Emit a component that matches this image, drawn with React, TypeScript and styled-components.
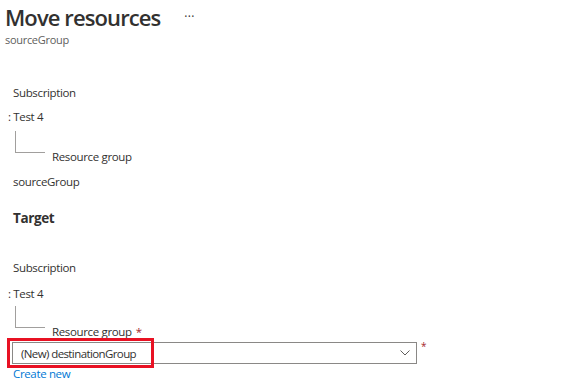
import React from 'react';
import styled, { createGlobalStyle } from 'styled-components';

const GlobalStyle = createGlobalStyle`
  body {
    margin: 0;
    background: #ffffff;
    font-family: "Segoe UI", "Open Sans", "Noto Sans", sans-serif;
    color: #323130;
  }
`;

const Page = styled.div`
  width: 586px;
  height: 382px;
  overflow: hidden;
  display: flex;
  flex-direction: column;
`;

const Header = styled.div`
  padding: 2px 0 0 5px;
  display: flex;
  flex-direction: column;
`;

const TitleRow = styled.div`
  display: flex;
  align-items: center;
  gap: 24px;
`;

const Title = styled.h1`
  margin: 0;
  font-size: 22px;
  font-weight: 600;
  line-height: 30px;
  letter-spacing: -0.9px;
`;

const More = styled.span`
  font-size: 12px;
  color: #323130;
  letter-spacing: 0.3px;
  margin-top: -2px;
`;

const Subtitle = styled.div`
  font-size: 11px;
  line-height: 16px;
  color: #605e5c;
  letter-spacing: -0.3px;
`;

const Section = styled.div<{ $top: number }>`
  display: flex;
  flex-direction: column;
  margin-top: ${({ $top }) => $top}px;
`;

const Label = styled.div<{ $indent?: number }>`
  font-size: 11.5px;
  line-height: 16px;
  letter-spacing: -0.35px;
  padding-left: ${({ $indent }) => $indent ?? 13}px;
  white-space: nowrap;
`;

const Value = styled(Label)<{ $gap: number }>`
  margin-top: ${({ $gap }) => $gap}px;
`;

const Heading = styled.h3<{ $gap: number }>`
  margin: ${({ $gap }) => $gap}px 0 0;
  padding-left: 13px;
  font-size: 13.5px;
  font-weight: 700;
  line-height: 20px;
  letter-spacing: -0.4px;
`;

const TreeRow = styled.div<{ $gap: number }>`
  display: flex;
  align-items: flex-start;
  margin-top: ${({ $gap }) => $gap}px;
`;

const Connector = styled.div`
  width: 29px;
  height: 21px;
  margin-left: 15px;
  border-left: 1px solid #a19f9d;
  border-bottom: 1px solid #a19f9d;
`;

const TreeLabel = styled.div`
  font-size: 11.5px;
  line-height: 16px;
  letter-spacing: -0.35px;
  margin: 18px 0 0 7px;
  white-space: nowrap;
`;

const Required = styled.span`
  color: #a4262c;
  margin-left: 4px;
`;

const DropdownRow = styled.div`
  position: relative;
  display: flex;
  align-items: flex-start;
  margin-top: 2px;
  padding-left: 12px;
`;

const Dropdown = styled.div`
  box-sizing: border-box;
  width: 405px;
  height: 22px;
  border: 1px solid #8a8886;
  display: flex;
  align-items: center;
  justify-content: space-between;
  padding: 0 6px 0 8px;
  font-size: 11.5px;
  letter-spacing: -0.6px;
`;

const FieldStar = styled.span`
  color: #a4262c;
  font-size: 10px;
  line-height: 10px;
  margin: -1px 0 0 4px;
`;

const Highlight = styled.div`
  position: absolute;
  left: 7px;
  top: -4px;
  width: 147px;
  height: 30px;
  box-sizing: border-box;
  border: 3px solid #e81123;
  pointer-events: none;
`;

const CreateLink = styled.a`
  font-size: 11.5px;
  line-height: 14px;
  letter-spacing: -0.35px;
  color: #0078d4;
  text-decoration: none;
  padding-left: 13px;
  margin-top: 3px;
`;

const Chevron = () => (
  <svg width="10" height="6" viewBox="0 0 10 6" fill="none">
    <path d="M0.5 0.5 L5 5 L9.5 0.5" stroke="#605e5c" strokeWidth="1" />
  </svg>
);

export default function App() {
  return (
    <Page>
      <GlobalStyle />
      <Header>
        <TitleRow>
          <Title>Move resources</Title>
          <More>···</More>
        </TitleRow>
        <Subtitle>sourceGroup</Subtitle>
      </Header>

      <Section $top={37}>
        <Label>Subscription</Label>
        <Value $indent={8} $gap={8}>: Test 4</Value>
        <TreeRow $gap={6}>
          <Connector />
          <TreeLabel>Resource group</TreeLabel>
        </TreeRow>
        <Value $gap={9}>sourceGroup</Value>
        <Heading $gap={18}>Target</Heading>
      </Section>

      <Section $top={32}>
        <Label>Subscription</Label>
        <Value $indent={8} $gap={10}>: Test 4</Value>
        <TreeRow $gap={4}>
          <Connector />
          <TreeLabel>
            Resource group<Required>*</Required>
          </TreeLabel>
        </TreeRow>
        <DropdownRow>
          <Dropdown>
            <span>(New) destinationGroup</span>
            <Chevron />
          </Dropdown>
          <FieldStar>*</FieldStar>
          <Highlight />
        </DropdownRow>
        <CreateLink href="#">Create new</CreateLink>
      </Section>
    </Page>
  );
}
